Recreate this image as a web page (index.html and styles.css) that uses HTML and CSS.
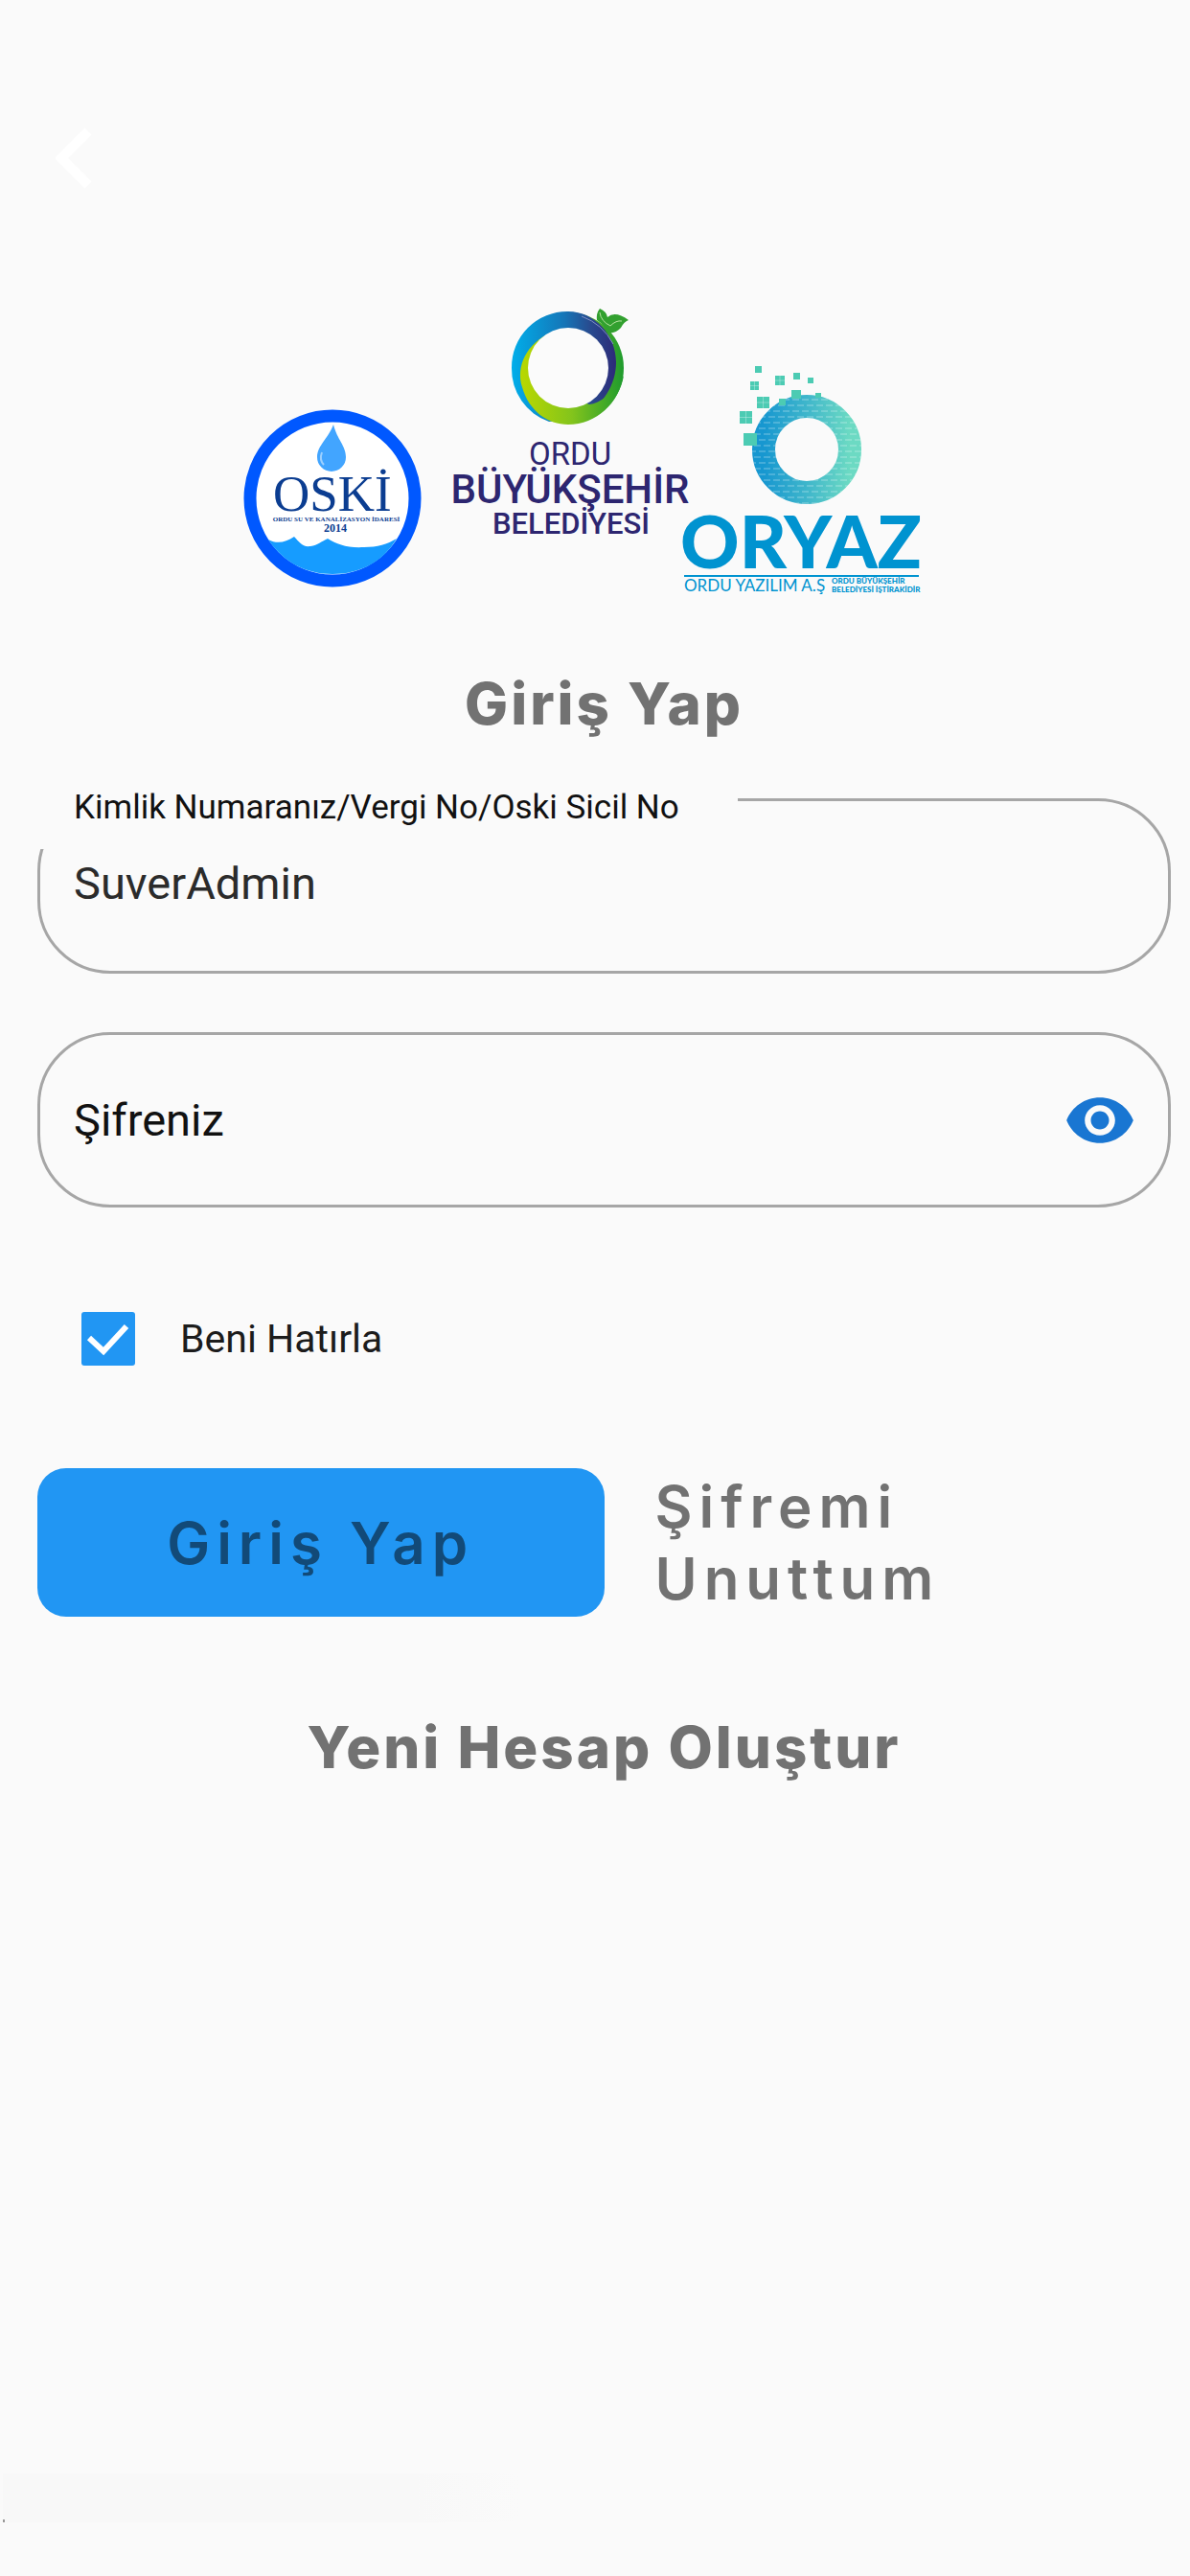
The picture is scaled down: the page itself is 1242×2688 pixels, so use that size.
FILE: index.html
```html
<!DOCTYPE html>
<html lang="tr">
<head>
<meta charset="utf-8">
<meta name="viewport" content="width=device-width, initial-scale=1">
<title>Giriş Yap</title>
<link rel="stylesheet" href="styles.css">
</head>
<body>
<div class="page">
  <header class="topbar">
    <button class="back" type="button" aria-label="Geri">
      <svg viewBox="0 0 38 64" width="38" height="64"><path d="M34 4 6 32l28 28" fill="none" stroke="#fff" stroke-width="10"/></svg>
    </button>
  </header>

  <main class="content">
    <svg class="logos" viewBox="253 320 754 302" role="img" aria-label="OSKİ, Ordu Büyükşehir Belediyesi, ORYAZ">
      <defs>
        <linearGradient id="blue" x1="0" y1="0" x2="1" y2="0"><stop offset="0" stop-color="#00aeea"/><stop offset=".5" stop-color="#1576b8"/><stop offset=".75" stop-color="#284b8f"/><stop offset="1" stop-color="#2d2a78"/></linearGradient>
        <linearGradient id="green" x1="0" y1="0" x2="1" y2="0"><stop offset="0" stop-color="#b9d800"/><stop offset=".5" stop-color="#83c41c"/><stop offset="1" stop-color="#1f9b2e"/></linearGradient>
        <linearGradient id="sea" x1="0" y1="0" x2="1" y2="0"><stop offset="0" stop-color="#1797d0"/><stop offset=".5" stop-color="#3fb6cb"/><stop offset="1" stop-color="#6cdac3"/></linearGradient>
        <pattern id="dash" width="10" height="12" patternUnits="userSpaceOnUse"><path d="M1 3h7M-4 9h7M6 9h7" stroke="#fff" stroke-opacity=".2" stroke-width="2"/></pattern>
      </defs>

      <g>
        <circle cx="346" cy="520" r="86" fill="#fff" stroke="#0058ff" stroke-width="13"/>
        <path d="M347 443c4 16 13 22 13 34a15 15 0 0 1-30 0c0-12 12-20 17-34z" fill="#42a5ff"/>
        <path d="M335 472q-3 8 2 13" fill="none" stroke="#9dd0ff" stroke-width="2"/>
        <path d="M279 563c9 5 18 3 27-3 6 6 8 11 17 10 8-1 11-5 18-8 10 6 20 10 38 9 14 0 24-3 34-9-14 24-38 37-67 37-28 0-52-13-67-36z" fill="#169cff"/>
        <text x="284" y="533" class="oski-name">OSKİ</text>
        <text x="350" y="544" class="oski-small">ORDU SU VE KANALİZASYON İDARESİ</text>
        <text x="349" y="555" class="oski-year">2014</text>
      </g>

      <g>
        <circle cx="592" cy="384" r="58" fill="url(#green)"/>
        <path d="M572 440A58 58 0 0 1 533 384A58 58 0 0 1 592 325C620 325 642 350 642 378C642 400 630 424 600 438z" fill="url(#blue)"/>
        <path d="M574 347C549 358 537 382 544 404C551 429 571 443 592 443C622 443 645 420 650 392C640 410 625 421 614 422L560 400z" fill="url(#green)"/>
        <circle cx="592" cy="384" r="42" fill="#fbfbfb"/>
        <path d="M606 330q22 8 33 29" fill="none" stroke="#7f8fc4" stroke-width="1"/>
        <path d="M622 334q-1-7 3-12 7 3 8 9 8-7 22 3-5 2-8 8-6 7-15 5-2-8-10-13z" fill="#32a02f"/>
        <path d="M625 326q1 9 11 14 6-6 12-5" fill="none" stroke="#b5e2a0" stroke-width="1"/>
        <text x="594" y="485" class="ordu-top">ORDU</text>
        <text x="594" y="525" class="ordu-main">BÜYÜKŞEHİR</text>
        <text x="595" y="557" class="ordu-sub">BELEDİYESİ</text>
      </g>

      <g>
        <circle cx="841" cy="469" r="45" fill="none" stroke="url(#sea)" stroke-width="24"/>
        <circle cx="841" cy="469" r="45" fill="none" stroke="url(#dash)" stroke-width="24"/>
        <path d="M787 382h7v7h-7zM782 398h9v9h-9zM808 392h10v10h-10zM827 389h7v7h-7zM842 394h6v6h-6zM789 414h13v12h-13zM812 416h7v7h-7zM825 407h10v9h-10zM850 410h6v5h-6zM771 429h13v13h-13zM775 452h14v13h-14z" fill="#4ccbb3"/>
        <path d="M777.500 429v13M771 435.500h13M795.500 414v12M789 420h13M786.500 398v9M782 402.500h9M813 392v10M808 397h10" stroke="#fff" stroke-opacity=".3"/>
        <text x="835" y="593" class="oryaz-name">ORYAZ</text>
        <path d="M713 601h245" stroke="#0093d0" stroke-width="2"/>
        <text x="713" y="617" class="oryaz-sub">ORDU YAZILIM A.Ş</text>
        <text x="867" y="609" class="oryaz-small">ORDU BÜYÜKŞEHİR</text>
        <text x="867" y="618" class="oryaz-small">BELEDİYESİ İŞTİRAKİDİR</text>
      </g>
    </svg>

    <h1 class="title">Giriş Yap</h1>

    <form class="form">
      <div class="field field--notched">
        <input class="field-input" id="user" type="text" value="SuverAdmin">
        <label class="field-notch" for="user">Kimlik Numaranız/Vergi No/Oski Sicil No</label>
      </div>
      <div class="field">
        <input class="field-input" id="password" type="password">
        <label class="field-label" for="password">Şifreniz</label>
        <button class="reveal" type="button" aria-label="Şifreyi göster">
          <svg viewBox="0 0 24 24" width="76" height="76"><path fill="#1976d2" d="M12 4.500C7 4.500 2.730 7.610 1 12c1.730 4.390 6 7.500 11 7.500s9.270-3.110 11-7.500c-1.730-4.390-6-7.500-11-7.500zM12 17c-2.760 0-5-2.240-5-5s2.240-5 5-5 5 2.240 5 5-2.240 5-5 5zm0-8c-1.660 0-3 1.340-3 3s1.340 3 3 3 3-1.340 3-3-1.340-3-3-3z"/></svg>
        </button>
      </div>
      <div class="remember">
        <input class="check" id="remember" type="checkbox" checked>
        <label for="remember">Beni Hatırla</label>
      </div>
      <div class="actions">
        <button class="submit" type="submit">Giriş Yap</button>
        <a class="forgot" href="#">Şifremi Unuttum</a>
      </div>
    </form>

    <a class="register" href="#">Yeni Hesap Oluştur</a>
  </main>

  <footer class="strip"></footer>
</div>
</body>
</html>
```
FILE: styles.css
```css
* {
  box-sizing: border-box;
}

body {
  margin: 0;
  background: #fafafa;
  color: #1c1c1c;
  font-family: Roboto, "Liberation Sans", sans-serif;
}

button {
  border: 0;
  padding: 0;
  background: none;
  font: inherit;
  cursor: pointer;
}

a {
  color: #727272;
  text-decoration: none;
}

svg {
  display: block;
}

.page {
  display: flex;
  flex-direction: column;
  min-height: 100vh;
  padding-bottom: 56px;
}

.topbar {
  display: flex;
  padding: 133px 58px 123px;
}

.content {
  display: flex;
  flex-direction: column;
  align-items: center;
  padding: 0 20px 0 39px;
}

.logos {
  width: 754px;
  max-width: 100%;
  height: auto;
}

.title,
.register,
.submit,
.forgot {
  font-family: Inter, Roboto, sans-serif;
  font-size: 60px;
}

.title,
.register {
  font-weight: 800;
  line-height: 70px;
  letter-spacing: 3px;
}

.title {
  margin: 77px 0 64px;
  color: #727272;
}

.form {
  width: 100%;
}

.field {
  position: relative;
  display: flex;
  align-items: center;
  height: 183px;
  margin-bottom: 61px;
}

.field-input {
  width: 100%;
  height: 100%;
  padding: 0 140px 0 35px;
  border: 3px solid #a6a6a6;
  border-radius: 76px;
  outline: 0;
  background: transparent;
  color: #2b2b2b;
  font: 400 47px/60px Roboto, "Liberation Sans", sans-serif;
}

.field--notched .field-input {
  padding-bottom: 6px;
}

.field-notch {
  position: absolute;
  top: -10px;
  left: 0;
  width: 731px;
  max-width: 80%;
  height: 63px;
  padding-left: 38px;
  background: #fafafa;
  color: #111;
  font-size: 35px;
  line-height: 40px;
  white-space: nowrap;
}

.field-label {
  position: absolute;
  left: 38px;
  color: #111;
  font-size: 47px;
  line-height: 60px;
}

.reveal {
  position: absolute;
  right: 36px;
}

.remember {
  display: flex;
  align-items: center;
  gap: 47px;
  margin: 109px 0 107px;
  padding-left: 46px;
  font-size: 41px;
  line-height: 56px;
}

.check {
  width: 56px;
  height: 56px;
  margin: 0;
  appearance: none;
  border-radius: 3px;
  background: #2196f3 url("data:image/svg+xml,%3Csvg xmlns='http://www.w3.org/2000/svg' viewBox='0 0 56 56'%3E%3Cpath d='M8 27l15 14 24-26' fill='none' stroke='%23fff' stroke-width='6'/%3E%3C/svg%3E") center / contain no-repeat;
}

.actions {
  display: grid;
  grid-template-columns: 1fr 1fr;
  align-items: center;
}

.submit,
.forgot {
  font-weight: 600;
  letter-spacing: 7px;
}

.submit {
  height: 155px;
  border-radius: 30px;
  background: #2196f3;
  color: #124a78;
}

.forgot {
  max-width: 400px;
  padding-left: 53px;
  line-height: 75px;
}

.register {
  margin-top: 101px;
}

.strip {
  width: 540px;
  max-width: 100%;
  height: 51px;
  margin: auto 0 0 3px;
  background: linear-gradient(90deg, #f8f8f8 80%, #fafafa);
}

.strip::before {
  content: "";
  display: block;
  width: 2px;
  height: 51px;
  background: linear-gradient(transparent 48px, #999 48px);
}

.oski-name {
  fill: #0b3d91;
  font: 400 53px "Liberation Serif", serif;
}

.oski-small {
  fill: #0b3d91;
  font: 700 7px "Liberation Serif", serif;
  text-anchor: middle;
}

.oski-year {
  fill: #0b3d91;
  font: 700 12px "Liberation Serif", serif;
  text-anchor: middle;
}

.ordu-top,
.ordu-main,
.ordu-sub {
  fill: #2d2670;
  font-family: Roboto, sans-serif;
  font-weight: 500;
  text-anchor: middle;
}

.ordu-top {
  font-size: 33px;
  font-weight: 400;
}

.ordu-main {
  font-size: 42px;
}

.ordu-sub {
  font-size: 31px;
}

.oryaz-name {
  fill: #0093d0;
  font: 900 76px Lato, sans-serif;
  text-anchor: middle;
}

.oryaz-sub {
  fill: #0093d0;
  font: 400 17px Lato, sans-serif;
}

.oryaz-small {
  fill: #0093d0;
  font: 900 8px Lato, sans-serif;
}
```
